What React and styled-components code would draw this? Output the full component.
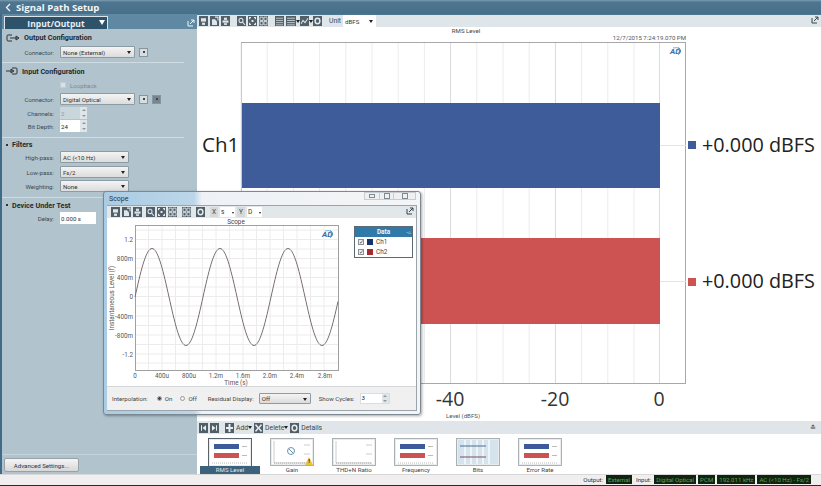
import React from "react";
import styled, { createGlobalStyle } from "styled-components";

const Global = createGlobalStyle`
  html, body { margin: 0; padding: 0; background: #fff; }
  body { font-family: Roboto, "Open Sans", "Liberation Sans", sans-serif; color: #333; overflow: hidden; }
  * { box-sizing: border-box; }
`;

const Page = styled.div`
  position: relative; width: 821px; height: 486px; display: flex; flex-direction: column; overflow: hidden; background: #fff;
`;
const TitleBar = styled.header`
  height: 14px; flex: none; display: flex; align-items: center; padding-left: 5px; gap: 5px;
  background: linear-gradient(#7d9db3 0, #4f7690 2px, #486f89 100%);
  color: #f2f6f8; font: 700 9.6px "Open Sans", sans-serif;
`;
const Body = styled.div`display: flex; flex: 1; min-height: 0;`;
const Sidebar = styled.aside`
  width: 197px; flex: none; display: flex; flex-direction: column; background: #b1c4cd; border-left: 2px solid #3f6b88;
`;
const TabBand = styled.div`
  height: 15px; flex: none; display: flex; align-items: flex-end; justify-content: space-between;
  padding: 0 2px 0 2px; background: #5f88a2;
`;
const Tab = styled.div`
  width: 104px; height: 13px; background: #2f526b; border: 1px solid #dbe5ea; border-bottom: 0;
  color: #e8eef2; font: 700 8.5px "Open Sans", sans-serif; display: flex; align-items: center; justify-content: center; position: relative;
  &::after { content: ""; position: absolute; right: 2px; top: 3px; border: 3px solid transparent; border-top: 5px solid #fff; }
`;
const Popout = styled.svg`width: 8px; height: 8px; flex: none; margin-bottom: 2px;`;
const Section = styled.section`
  display: flex; flex-direction: column; padding-bottom: ${p => p.$pb || 4}px; border-bottom: 1px solid #cfdce2; margin-right: 13px;
  &:last-of-type { border-bottom: 0; }
`;
const SectionHead = styled.h3`
  margin: 0; height: ${p => p.$h || 16}px; display: flex; align-items: center; gap: 4px; padding-left: ${p => p.$pad || 4}px;
  font-size: 7.2px; font-weight: 700; color: #1f2a30;
`;
const Bullet = styled.span`width: 2px; height: 2px; background: #333; margin-left: 3px;`;
const FormRow = styled.div`
  height: 12px; display: grid; grid-template-columns: 52px auto; column-gap: 6px; align-items: center;
  margin-bottom: ${p => p.$after || 0}px;
`;
const FieldLabel = styled.label`text-align: right; font-size: 6.1px; color: #3c474d; white-space: nowrap;`;
const Controls = styled.div`display: flex; align-items: center; gap: 4px;`;
const Select = styled.div`
  width: ${p => p.$w || 75}px; height: 12px; display: flex; align-items: center; justify-content: space-between; padding: 0 3px 0 2px;
  font-size: 6.1px; color: #333; border: 1px solid #8d9ba3; border-radius: 1px;
  background: ${p => p.$flat ? "#fff" : "linear-gradient(#f4f4f4,#dcdcdc)"};
  ${p => p.$flat && "border: 0;"}
  &::after { content: ""; border: 2px solid transparent; border-top: 3px solid #222; margin-top: 3px; }
`;
const SmallBtn = styled.div`
  width: 9px; height: 9px; border: 1px solid #87959c; background: ${p => p.$dark ? "#77868e" : "#d6dee2"};
  display: flex; align-items: center; justify-content: center;
  &::after { content: ""; width: 2px; height: 2px; background: #444; }
`;
const Check = styled.span`width: 6px; height: 6px; background: #d6e0e5; border: 1px solid #c2ced4;`;
const CheckLabel = styled.span`font-size: 6.1px; color: #7a8a92;`;
const Spinner = styled.div`
  display: flex; width: 27px; height: ${p => p.$h || 12}px; background: ${p => p.$off ? "#c9d6dc" : "#fff"};
  font-size: 6.1px; color: ${p => p.$off ? "#8a989f" : "#222"}; align-items: center; padding-left: 1px; justify-content: space-between;
`;
const SpinArrows = styled.span`
  width: 7px; height: 100%; display: flex; flex-direction: column; justify-content: space-around; align-items: center; background: #dfe6e9;
  &::before { content: ""; border: 2px solid transparent; border-bottom: 2px solid #8b979d; border-top: 0; }
  &::after { content: ""; border: 2px solid transparent; border-top: 2px solid #8b979d; border-bottom: 0; }
`;
const DelayInput = styled.div`width: 36px; height: 12px; background: #fff; font-size: 6.1px; padding-left: 1px; display: flex; align-items: center;`;
const SideFoot = styled.div`
  margin-top: auto; border-top: 1px solid #c6d5dc; padding: 3px 0 2px 2px; height: 20px; display: flex; align-items: flex-start;
`;
const AdvancedBtn = styled.button`
  width: 75px; height: 14px; padding: 0; font: 400 6.1px Roboto, sans-serif; color: #333; border: 1px solid #97a2a8; border-radius: 2px;
  background: linear-gradient(#f5f5f5, #d7d7d7);
`;
const Main = styled.main`flex: 1; min-width: 0; display: flex; flex-direction: column;`;
const ToolBar = styled.div`
  height: ${p => p.$h || 13}px; flex: none; display: flex; align-items: center; gap: 2px; padding-left: 2px; background: #dfe6ea; position: relative;
`;
const TopGap = styled.div`height: 1px; flex: none; background: #4f7690;`;
const Spacer = styled.span`width: ${p => p.$w}px; flex: none;`;
const ToolText = styled.span`font-size: 6.8px; color: ${p => p.$c || "#444"}; white-space: nowrap;`;
const Caret = styled.span`border: 2px solid transparent; border-top: 3px solid #222; margin: 2px -2px 0 -2px;`;
const PushRight = styled.span`margin-left: auto; margin-right: 2px; display: flex;`;
const ChartArea = styled.div`flex: 1; min-height: 0;`;
const Drawing = styled.svg`display: block;`;
const BottomTools = styled.div`
  height: 13px; flex: none; display: flex; align-items: center; gap: 2px; padding: 0 3px 0 2px; background: #dfe5e8;
`;
const Gallery = styled.div`height: 40px; flex: none; display: flex; gap: 2px; padding: 4px 0 0 3px;`;
const GalleryItem = styled.figure`
  width: 60px; margin: 0; display: flex; flex-direction: column; align-items: center;
`;
const ThumbFrame = styled.div`
  position: relative; width: 44px; height: 28px; border: 1px solid #a9b1b5; background: ${p => p.$tint ? "#d5e3ec" : "#fff"}; box-shadow: inset 0 0 0 1px #e8ecee; overflow: hidden;
  ${p => p.$on && "border-color:#59636a; border-width: 1px 1px 0;"}
`;
const Warn = styled.span`
  position: absolute; right: 0; bottom: 0; width: 8px; height: 8px; background: #e8c33a; color: #222; font-size: 6px; font-weight: 700;
  display: flex; align-items: center; justify-content: center; clip-path: polygon(50% 0, 100% 100%, 0 100%); line-height: 1;
`;
const ThumbCaption = styled.figcaption`
  width: 100%; height: 8px; text-align: center; font-size: 6.1px; line-height: 8px; margin-top: 0;
  color: ${p => p.$on ? "#dfe8ee" : "#444"}; background: ${p => p.$on ? "#3c617c" : "transparent"};
`;
const StatusBar = styled.footer`
  height: 12px; flex: none; display: flex; align-items: center; justify-content: flex-end; gap: 2px; padding: 0 10px 1px 0;
  background: #f0eeee; border-top: 1px solid #d8d8d8; border-bottom: 1px solid #2a2a2a; font-size: 6.1px; color: #333;
`;
const StatusLabel = styled.span`margin: 0 1px 0 2px;`;
const StatusChip = styled.span`background: #10240f; color: #5ea35c; padding: 0 2px; height: 9px; line-height: 9px; white-space: nowrap;`;

const Win = styled.div`
  position: absolute; left: 103px; top: 191px; width: 318px; height: 224px; display: flex; flex-direction: column;
  padding: 0 3px 3px; border: 1px solid #7d8890; border-radius: 3px; box-shadow: 1px 1px 3px rgba(0,0,0,.35);
  background: linear-gradient(90deg, #a9cce4 0, #bcd6e8 90px, #eef2f6 98px, #f4f5f7 100%);
`;
const WinTitle = styled.div`
  height: 13px; flex: none; display: flex; align-items: center; justify-content: space-between; font-size: 7px; color: #333; padding-left: 2px;
`;
const WinBtns = styled.div`display: flex; height: 8px; margin-top: -5px; margin-right: 1px;`;
const WinBtn = styled.span`
  width: ${p => p.$w}px; height: 8px; border: 1px solid #c7ccd0; border-left-width: ${p => p.$first ? 1 : 0}px; background: #eef0f2;
  display: flex; align-items: center; justify-content: center;
  &::after { content: ""; width: 4px; height: ${p => p.$h || 4}px; border: 1px solid #7f8b92; }
`;
const WinInner = styled.div`flex: 1; min-height: 0; background: #fff; display: flex; flex-direction: column; border: 1px solid #9aa4aa; border-left-width: 0;`;
const ScopeBar = styled(ToolBar)`height: 12px; padding-left: 4px; background: #e2e7ea;`;
const AxisBox = styled.span`
  width: 8px; height: 10px; display: flex; align-items: center; justify-content: center; background: #d4d9dc; font-size: 6.5px; color: #444;
`;
const MiniSelect = styled.span`width: 15px; height: 10px; display: flex; align-items: center; justify-content: space-between; font-size: 6.5px; padding: 0 1px; background: #fff;
  &::after { content: ""; border: 1.5px solid transparent; border-top: 2.5px solid #222; margin-top: 2px; }
`;
const ScopeBody = styled.div`flex: 1; min-height: 0; display: flex; position: relative;`;
const Legend = styled.div`
  position: absolute; left: 247px; top: 8px; width: 59px; height: 32px; border: 1px solid #5a6a75; background: #fff; font-size: 6.4px;
`;
const LegendHead = styled.div`
  height: 10px; background: #2f7aa9; color: #f0f6fa; font-weight: 700; text-align: center; line-height: 10px; position: relative;
  &::after { content: "-\\2302"; position: absolute; right: 1px; top: 0; font-weight: 400; font-size: 5px; }
`;
const LegendRow = styled.div`height: 10px; display: flex; align-items: center; gap: 3px; padding-left: 3px; color: #444;`;
const LegendCheck = styled.span`width: 6px; height: 6px; border: 1px solid #8a9298; background: #eee; font-size: 5.5px; line-height: 5px; color: #444;`;
const Swatch = styled.span`width: 6px; height: 6px; background: ${p => p.$c};`;
const ScopeFoot = styled.div`
  height: 24px; flex: none; display: flex; align-items: center; padding-left: 5px; background: #f0f0f0; border-top: 1px solid #d5d8da; font-size: 6.1px; color: #444;
`;
const FootText = styled.span`margin-left: ${p => p.$ml || 0}px; white-space: nowrap;`;
const Radio = styled.span`
  width: 5px; height: 5px; border-radius: 50%; margin-left: ${p => p.$ml || 0}px; margin-right: 3px; border: 1px solid #999;
  background: ${p => p.$on ? "radial-gradient(circle,#445 0 1.3px,#eee 1.6px)" : "#f4f4f4"};
`;
const FootSelect = styled(Select)`width: 52px; height: 11px; margin-left: 5px;`;
const FootSpin = styled(Spinner)`width: 30px; height: 11px; margin-left: 5px; border: 1px solid #ddd; align-items: flex-start;`;

const glyphs = {
  save: <><rect x="2" y="2" width="5" height="3" fill="#dfe6ea" /><rect x="3" y="6" width="3" height="2" fill="#dfe6ea" /></>,
  open: <><path d="M2 3h3l2 2v3H2z" fill="#dfe6ea" /><path d="M5 1h3v3" stroke="#dfe6ea" fill="none" /></>,
  print: <><rect x="3" y="1.5" width="3" height="2" fill="#dfe6ea" /><rect x="1.5" y="4" width="6" height="2" fill="#dfe6ea" /><rect x="3" y="6.5" width="3" height="1.5" fill="#dfe6ea" /></>,
  zoom: <><circle cx="4" cy="4" r="2" fill="none" stroke="#dfe6ea" /><path d="M5.5 5.5 8 8" stroke="#dfe6ea" /></>,
  fit: <path d="M1 1h2v1H2v1H1zM6 1h2v2H7V2H6zM1 6h1v1h1v1H1zM7 6h1v2H6V7h1zM3.5 3.5h2v2h-2z" fill="#dfe6ea" />,
  expand: <path d="M1 1h3v3H1zM5 1h3v3H5zM1 5h3v3H1zM5 5h3v3H5z" fill="none" stroke="#dfe6ea" strokeWidth=".8" />,
  table: <path d="M1 2h7M1 4h7M1 6h7M1 8h7" stroke="#dfe6ea" strokeWidth=".7" />,
  chart: <path d="M1 7 3 4l2 2 3-4" stroke="#dfe6ea" fill="none" />,
  gear: <><circle cx="4.5" cy="4.5" r="2.4" fill="none" stroke="#e8edf0" strokeWidth="1.4" /></>,
  first: <path d="M2 2h1v5H2zM7 2v5L3.5 4.5z" fill="#e8edf0" />,
  last: <path d="M6 2h1v5H6zM2 2v5l3.5-2.5z" fill="#e8edf0" />,
  plus: <path d="M3.5 1h2v2.5H8v2H5.500V8h-2V5.500H1v-2h2.500z" fill="#e8edf0" />,
  cross: <path d="M2 1 4.500 3.500 7 1l1 1-2.500 2.500L8 7 7 8 4.500 5.500 2 8 1 7l2.500-2.500L1 2z" fill="#e8edf0" />,
};
const Tool = ({ kind, w = 9, h = 10 }) => (
  <svg width={w} height={h} viewBox="0 0 9 9" preserveAspectRatio="none" style={{ flex: "none" }}>
    <rect width="9" height="9" fill="#515f69" />
    {glyphs[kind]}
  </svg>
);
const PopoutIcon = ({ c = "#f2f6f8" }) => (
  <Popout viewBox="0 0 8 8"><path d="M1 2v5h5M3 5l4-4M4 1h3v3" stroke={c} fill="none" strokeWidth="1" /></Popout>
);

const ApLogo = ({ x, y }) => (
  <g transform={`translate(${x} ${y})`}>
    <path d="M5 -3.500A5 4 0 0 1 5 3.500" fill="none" stroke="#3a94c2" strokeWidth="1" transform="translate(3 0)" />
    <path d="M3 -3A6 4 0 0 1 10 -2" fill="none" stroke="#3a94c2" strokeWidth=".7" />
    <text x="0" y="3" fontSize="8" fontWeight="700" fontStyle="italic" fill="#3a6ea5">AD</text>
  </g>
);

const BarThumb = () => (
  <Drawing width="42" height="27" viewBox="0 0 42 27">
    <rect x="5" y="5" width="25" height="5" fill="#3d5a9b" />
    <rect x="5" y="14" width="25" height="5" fill="#cd5252" />
    <path d="M33 7.500h5M33 16.500h5" stroke="#bbb" />
    <path d="M3 24h36" stroke="#bbb" strokeDasharray="1 1" />
  </Drawing>
);
const EmptyThumb = ({ dial }) => (
  <Drawing width="42" height="27" viewBox="0 0 42 27">
    <path d="M3 2v22h36" stroke="#ccc" fill="none" />
    <path d="M3 24h36" stroke="#aaa" strokeDasharray="1 1" />
    <path d="M33 6h6M33 15h6" stroke="#ccc" />
    {dial && <><circle cx="20" cy="12" r="3.500" fill="none" stroke="#6b94b2" /><path d="M18 10l4 4" stroke="#6b94b2" /></>}
  </Drawing>
);
const BitsThumb = () => (
  <Drawing width="42" height="27" viewBox="0 0 42 27">
    {[8, 14, 20, 26, 32].map(x => <path key={x} d={`M${x} 1v24`} stroke="#eef4f8" strokeWidth="2" />)}
    <path d="M3 7h26" stroke="#47708e" strokeWidth="1" />
    <path d="M3 18h26" stroke="#7a4f62" strokeWidth="1" />
  </Drawing>
);

const thumbs = [
  { name: "RMS Level", body: <BarThumb />, on: true },
  { name: "Gain", body: <EmptyThumb dial />, warn: true },
  { name: "THD+N Ratio", body: <EmptyThumb /> },
  { name: "Frequency", body: <BarThumb /> },
  { name: "Bits", body: <BitsThumb />, tint: true },
  { name: "Error Rate", body: <BarThumb /> },
];

const minorX = [];
for (let x = 241; x < 660; x += 26.2) minorX.push(x);

const MainChart = () => (
  <Drawing width="624" height="394" viewBox="197 27 624 394" fontFamily="Roboto, sans-serif">
    <text x="466" y="33" fontSize="6.100" textAnchor="middle" fill="#444">RMS Level</text>
    <text x="686" y="39.500" fontSize="6.100" textAnchor="end" fill="#555">12/7/2015 7:24:19.070 PM</text>
    <rect x="241.500" y="42.500" width="444" height="341" fill="#fff" stroke="#a8a8a8" />
    {minorX.map(x => <path key={x} d={`M${x} 43V383`} stroke="#ececec" />)}
    <path d="M450.500 43V383M555.500 43V383M659.500 43V383" stroke="#dcdcdc" />
    <path d="M660 145.500H686M660 281.500H686" stroke="#e4e4e4" />
    <rect x="242" y="103" width="418" height="85" fill="#3e5c9a" />
    <rect x="242" y="238" width="418" height="86" fill="#cd5353" />
    <ApLogo x={670} y={51} />
    <g fontFamily="'Open Sans', sans-serif">
      <text x="202" y="152" fontSize="20.500" fill="#222">Ch1</text>
      <rect x="688" y="141" width="8" height="8" fill="#3e5c9a" />
      <rect x="688" y="278" width="8" height="8" fill="#cd5353" />
      <text x="702" y="152" fontSize="19.800" fill="#222">+0.000 dBFS</text>
      <text x="702" y="288" fontSize="19.800" fill="#222">+0.000 dBFS</text>
      <text x="450" y="406" fontSize="19.500" textAnchor="middle" fill="#333">-40</text>
      <text x="555" y="406" fontSize="19.500" textAnchor="middle" fill="#333">-20</text>
      <text x="659" y="406" fontSize="19.500" textAnchor="middle" fill="#333">0</text>
    </g>
    <text x="463" y="418" fontSize="6.100" textAnchor="middle" fill="#555">Level (dBFS)</text>
  </Drawing>
);

const scopeSine = (() => {
  const pts = [];
  for (let x = 0; x <= 203; x += 1) {
    pts.push(`${x === 0 ? "M" : "L"}${(28 + x).toFixed(1)} ${(79 - 48.500 * Math.sin((2 * Math.PI * x) / 68)).toFixed(2)}`);
  }
  return pts.join("");
})();

const yTicks = [["1.2", 21.500], ["800m", 40.500], ["400m", 59.500], ["0", 78.500], ["-400m", 98], ["-800m", 117], ["-1.2", 136]];
const xTicks = [["0", 28], ["400u", 55], ["800u", 82], ["1.2m", 109], ["1.6m", 136], ["2.0m", 163], ["2.4m", 190], ["2.8m", 218]];
const scopeV = [41.500, 55, 68.500, 82, 95.500, 109, 122.500, 136, 149.500, 163, 176.500, 190, 203.500, 217];
const scopeH = [12, 21.500, 31, 40.500, 50, 59.500, 69, 78.500, 88, 98, 107.500, 117, 126.500, 136, 145];

const ScopePlot = () => (
  <Drawing width="308" height="169" viewBox="0 0 308 169" fontFamily="Roboto, sans-serif">
    <text x="129" y="5.500" fontSize="6.300" textAnchor="middle" fill="#444">Scope</text>
    <rect x="28.500" y="7.500" width="203" height="145" fill="#fff" stroke="#a0a0a0" />
    {scopeV.map(x => <path key={x} d={`M${x} 8V152`} stroke="#ececec" />)}
    {scopeH.map(y => <path key={y} d={`M29 ${y}H231`} stroke="#ececec" />)}
    <path d={scopeSine} fill="none" stroke="#7a6e72" strokeWidth="1" />
    <ApLogo x={215} y={16} />
    {yTicks.map(([t, y]) => <text key={t} x="26" y={y + 2.500} fontSize="6.300" textAnchor="end" fill="#555">{t}</text>)}
    {xTicks.map(([t, x]) => <text key={t} x={x} y="159.500" fontSize="6.300" textAnchor="middle" fill="#555">{t}</text>)}
    <text x="129" y="166.500" fontSize="6.300" textAnchor="middle" fill="#555">Time (s)</text>
    <text transform="translate(7 80) rotate(-90)" fontSize="6.300" textAnchor="middle" fill="#555">Instantaneous Level (f)</text>
  </Drawing>
);

export default function App() {
  return (
    <>
      <Global />
      <Page>
        <TitleBar>
          <svg width="6" height="9" viewBox="0 0 6 9"><path d="M5 1 1.500 4.500 5 8" stroke="#f2f6f8" fill="none" strokeWidth="1.300" /></svg>
          <span>Signal Path Setup</span>
        </TitleBar>
        <Body>
          <Sidebar>
            <TabBand>
              <Tab>Input/Output</Tab>
              <PopoutIcon />
            </TabBand>
            <Section>
              <SectionHead $h={17}>
                <svg width="14" height="8" viewBox="0 0 14 8"><path d="M6 1H2a1 1 0 0 0-1 1v4a1 1 0 0 0 1 1h4M4 4h8M10 2l3 2-3 2z" stroke="#333" fill="none" /></svg>
                Output Configuration
              </SectionHead>
              <FormRow>
                <FieldLabel>Connector:</FieldLabel>
                <Controls><Select>None (External)</Select><SmallBtn /></Controls>
              </FormRow>
            </Section>
            <Section $pb={5}>
              <SectionHead $h={16}>
                <svg width="12" height="8" viewBox="0 0 12 8"><path d="M6 1h4a1 1 0 0 1 1 1v4a1 1 0 0 1-1 1H6M0 4h7M5 2l3 2-3 2z" stroke="#333" fill="none" /></svg>
                Input Configuration
              </SectionHead>
              <FormRow $after={2}>
                <span />
                <Controls><Check /><CheckLabel>Loopback</CheckLabel></Controls>
              </FormRow>
              <FormRow $after={2}>
                <FieldLabel>Connector:</FieldLabel>
                <Controls><Select>Digital Optical</Select><SmallBtn /><SmallBtn $dark /></Controls>
              </FormRow>
              <FormRow $after={1}>
                <FieldLabel>Channels:</FieldLabel>
                <Controls><Spinner $off>2<SpinArrows /></Spinner></Controls>
              </FormRow>
              <FormRow>
                <FieldLabel>Bit Depth:</FieldLabel>
                <Controls><Spinner>24<SpinArrows /></Spinner></Controls>
              </FormRow>
            </Section>
            <Section $pb={5}>
              <SectionHead $h={13} $pad={1}><Bullet />Filters</SectionHead>
              <FormRow $after={3}>
                <FieldLabel>High-pass:</FieldLabel>
                <Controls><Select $w={69}>AC (&lt;10 Hz)</Select></Controls>
              </FormRow>
              <FormRow $after={2}>
                <FieldLabel>Low-pass:</FieldLabel>
                <Controls><Select $w={69}>Fs/2</Select></Controls>
              </FormRow>
              <FormRow>
                <FieldLabel>Weighting:</FieldLabel>
                <Controls><Select $w={69}>None</Select></Controls>
              </FormRow>
            </Section>
            <Section>
              <SectionHead $h={14} $pad={1}><Bullet />Device Under Test</SectionHead>
              <FormRow>
                <FieldLabel>Delay:</FieldLabel>
                <Controls><DelayInput>0.000 s</DelayInput></Controls>
              </FormRow>
            </Section>
            <SideFoot><AdvancedBtn>Advanced Settings...</AdvancedBtn></SideFoot>
          </Sidebar>
          <Main>
            <TopGap />
            <ToolBar $h={12}>
              <Tool kind="save" /><Tool kind="open" /><Tool kind="print" />
              <Spacer $w={3} />
              <Tool kind="zoom" /><Tool kind="fit" /><Tool kind="expand" />
              <Spacer $w={3} />
              <Tool kind="table" /><Tool kind="table" w={10} /><Caret />
              <Tool kind="chart" /><Caret />
              <Tool kind="gear" />
              <Spacer $w={3} />
              <ToolText>Unit</ToolText>
              <Select $flat $w={33}>dBFS</Select>
              <PushRight><PopoutIcon c="#33454f" /></PushRight>
            </ToolBar>
            <ChartArea><MainChart /></ChartArea>
            <BottomTools>
              <Tool kind="first" /><Tool kind="last" />
              <Spacer $w={2} />
              <Tool kind="plus" /><ToolText>Add</ToolText><Caret />
              <Spacer $w={0} />
              <Tool kind="cross" /><ToolText>Delete</ToolText><Caret />
              <Spacer $w={0} />
              <Tool kind="gear" /><ToolText>Details</ToolText>
              <PushRight><ToolText>≛</ToolText></PushRight>
            </BottomTools>
            <Gallery>
              {thumbs.map(t => (
                <GalleryItem key={t.name}>
                  <ThumbFrame $on={t.on} $tint={t.tint}>
                    {t.body}
                    {t.warn && <Warn>!</Warn>}
                  </ThumbFrame>
                  <ThumbCaption $on={t.on}>{t.name}</ThumbCaption>
                </GalleryItem>
              ))}
            </Gallery>
          </Main>
        </Body>
        <StatusBar>
          <StatusLabel>Output:</StatusLabel>
          <StatusChip>External</StatusChip>
          <StatusLabel>Input:</StatusLabel>
          <StatusChip>Digital Optical</StatusChip>
          <StatusChip>PCM</StatusChip>
          <StatusChip>192.011 kHz</StatusChip>
          <StatusChip>AC (&lt;10 Hz) - Fs/2</StatusChip>
        </StatusBar>

        <Win>
          <WinTitle>
            Scope
            <WinBtns>
              <WinBtn $first $w={16} $h={2} />
              <WinBtn $w={14} />
              <WinBtn $w={22} />
            </WinBtns>
          </WinTitle>
          <WinInner>
            <ScopeBar>
              <Tool kind="save" /><Tool kind="open" /><Tool kind="print" />
              <Spacer $w={0} />
              <Tool kind="zoom" /><Tool kind="fit" /><Tool kind="expand" />
              <Spacer $w={1} />
              <Tool kind="expand" />
              <Spacer $w={1} />
              <Tool kind="gear" />
              <Spacer $w={1} />
              <AxisBox>X</AxisBox>
              <MiniSelect>s</MiniSelect>
              <AxisBox>Y</AxisBox>
              <MiniSelect>D</MiniSelect>
              <PushRight><PopoutIcon c="#33454f" /></PushRight>
            </ScopeBar>
            <ScopeBody>
              <ScopePlot />
              <Legend>
                <LegendHead>Data</LegendHead>
                <LegendRow><LegendCheck>✓</LegendCheck><Swatch $c="#16356b" />Ch1</LegendRow>
                <LegendRow><LegendCheck>✓</LegendCheck><Swatch $c="#a82a2e" />Ch2</LegendRow>
              </Legend>
            </ScopeBody>
            <ScopeFoot>
              <FootText>Interpolation:</FootText>
              <Radio $on $ml={9} />
              <FootText>On</FootText>
              <Radio $ml={8} />
              <FootText>Off</FootText>
              <FootText $ml={11}>Residual Display:</FootText>
              <FootSelect>Off</FootSelect>
              <FootText $ml={8}>Show Cycles:</FootText>
              <FootSpin>3<SpinArrows /></FootSpin>
            </ScopeFoot>
          </WinInner>
        </Win>
      </Page>
    </>
  );
}
